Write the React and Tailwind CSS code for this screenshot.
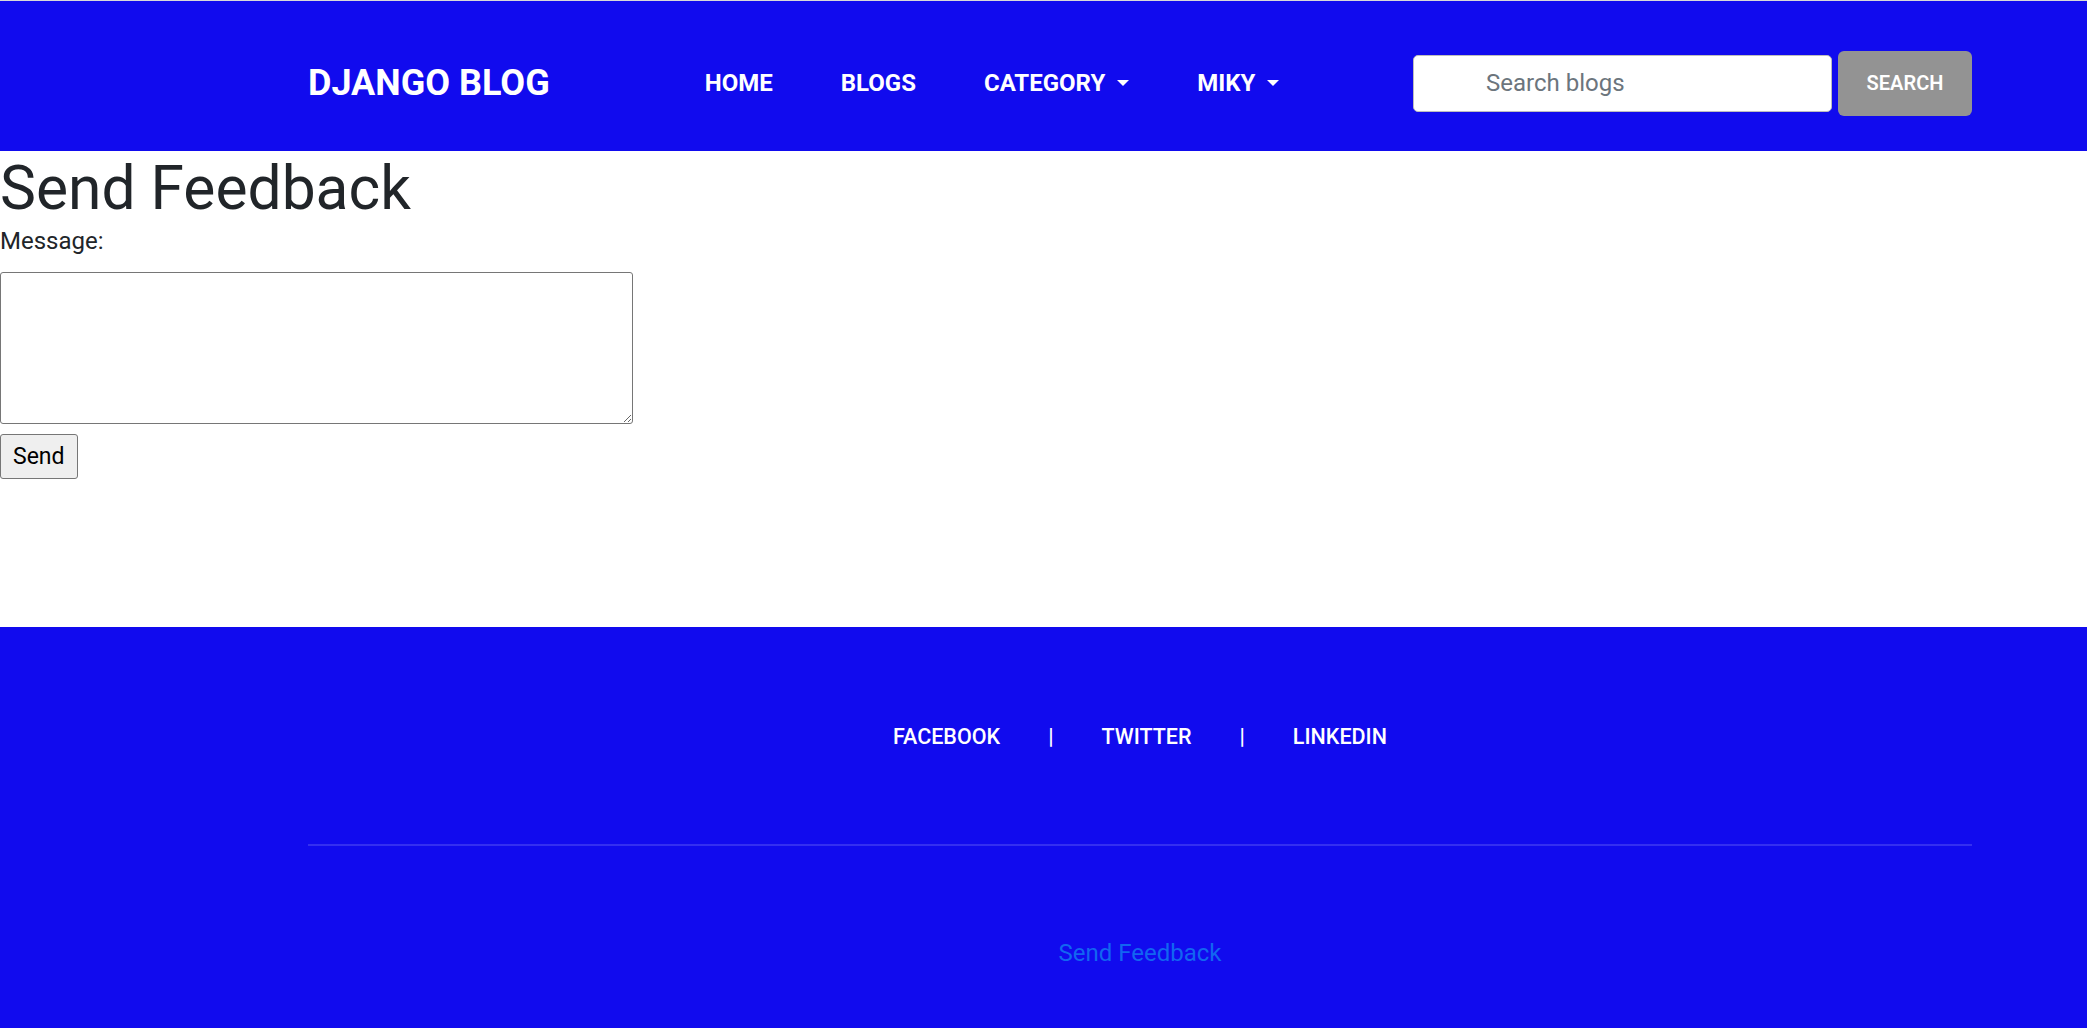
import React from "react";

const navLinks = [
    { label: "HOME" },
    { label: "BLOGS" },
    { label: "CATEGORY", dropdown: true },
    { label: "MIKY", dropdown: true },
];

const footerLinks = ["FACEBOOK", "TWITTER", "LINKEDIN"];

const Caret = () => (
    <span className="ml-[12px] inline-block w-0 h-0 border-x-[6px] border-x-transparent border-t-[6px] border-t-white"></span>
);

const Navbar = () => (
    <nav className="bg-[#110bee] h-[150px] pt-[14px] flex items-center">
        <div className="w-[1664px] ml-[308px] flex items-center">
            <a href="#" className="text-white font-bold text-[36px] leading-none whitespace-nowrap">
                DJANGO BLOG
            </a>
            <ul className="flex items-center ml-[121px]">
                {navLinks.map(link => (
                    <li key={link.label}>
                        <a href="#" className="flex items-center px-[34px] text-white font-bold text-[24px] leading-none">
                            {link.label}
                            {link.dropdown && <Caret />}
                        </a>
                    </li>
                ))}
            </ul>
            <form className="ml-auto flex items-center gap-[6px]" onSubmit={e => e.preventDefault()}>
                <input
                    type="search"
                    placeholder="Search blogs"
                    className="w-[419px] h-[57px] bg-white rounded-[5px] border border-[#bdbdbd] pl-[72px] pr-3 text-[24px] text-[#4f4f4f] placeholder:text-[#6c757d] outline-none"
                />
                <button
                    type="submit"
                    className="w-[134px] h-[65px] bg-[#939393] rounded-[6px] text-white font-semibold text-[20px]"
                >
                    SEARCH
                </button>
            </form>
        </div>
    </nav>
);

const FeedbackForm = () => (
    <main className="h-[476px] bg-white text-[#212529]">
        <h1 className="text-[60.5px] leading-[1.24] font-normal">Send Feedback</h1>
        <form onSubmit={e => e.preventDefault()}>
            <label htmlFor="message" className="block text-[24px] leading-[1.4] -mt-px">Message:</label>
            <textarea
                id="message"
                className="block mt-[13px] w-[633px] h-[152px] border border-[#767676] rounded-[3px] bg-white"
            ></textarea>
            <button
                type="submit"
                className="mt-[10px] h-[45px] px-[12px] bg-[#efefef] border border-[#767676] rounded-[3px] text-[23px] leading-none text-black"
            >
                Send
            </button>
        </form>
    </main>
);

const Footer = () => (
    <footer className="bg-[#110bee] pt-[94px] pb-[80px]">
        <div className="w-[1664px] ml-[308px]">
            <div className="flex justify-center items-center text-white font-medium text-[21.5px] leading-[1.5]">
                {footerLinks.map((name, i) => (
                    <React.Fragment key={name}>
                        {i > 0 && <span>|</span>}
                        <a href="#" className="px-[48px]">{name}</a>
                    </React.Fragment>
                ))}
            </div>
            <hr className="mt-[91px] border-0 h-[2px] bg-white/15" />
            <div className="mt-[89px] text-center">
                <a href="#" className="text-[#1266f1] text-[24px] leading-[1.5]">Send Feedback</a>
            </div>
        </div>
    </footer>
);

export default function App() {
    return (
        <div className="min-h-screen bg-white border-t border-[#d9d9d9] font-['Roboto',sans-serif] overflow-hidden">
            <Navbar />
            <FeedbackForm />
            <Footer />
        </div>
    );
}
